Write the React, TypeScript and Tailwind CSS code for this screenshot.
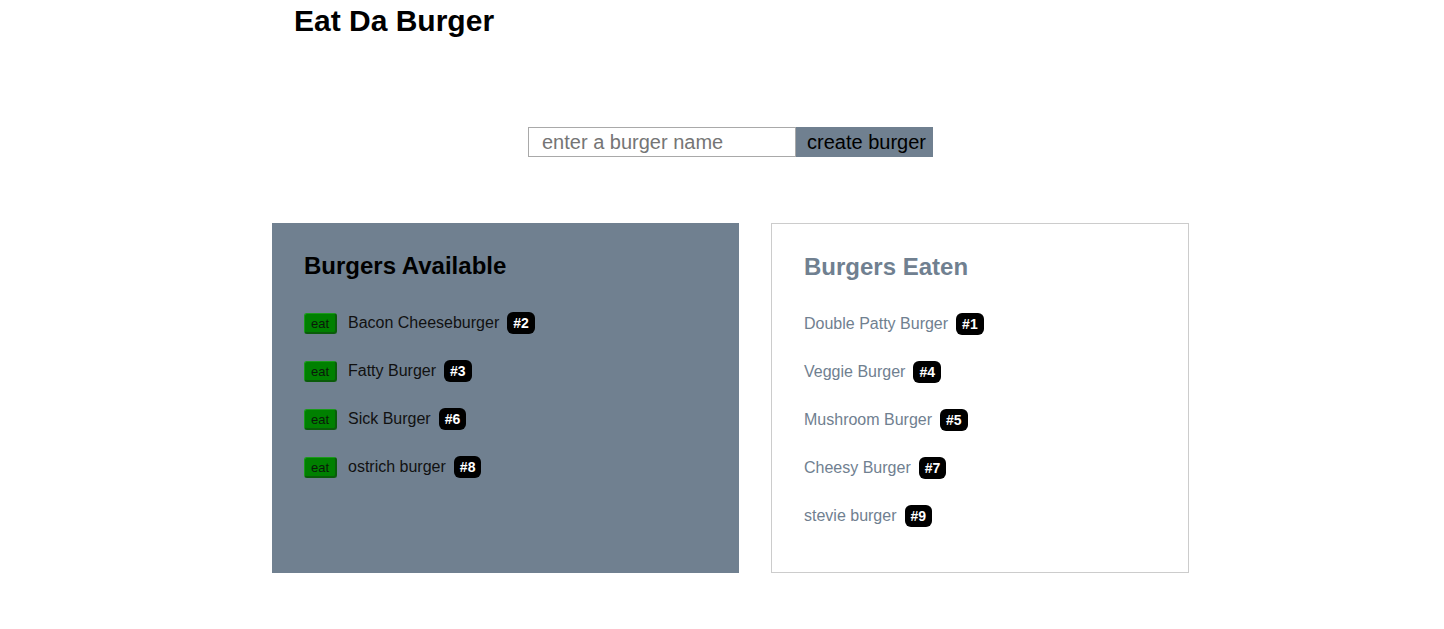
import React from "react";

const available = [
  { name: "Bacon Cheeseburger", id: 2 },
  { name: "Fatty Burger", id: 3 },
  { name: "Sick Burger", id: 6 },
  { name: "ostrich burger", id: 8 },
];

const eaten = [
  { name: "Double Patty Burger", id: 1 },
  { name: "Veggie Burger", id: 4 },
  { name: "Mushroom Burger", id: 5 },
  { name: "Cheesy Burger", id: 7 },
  { name: "stevie burger", id: 9 },
];

function Badge({ id }: { id: number }) {
  return (
    <span className="ml-[8px] inline-flex h-[22px] items-center rounded-[6px] bg-black px-[6px] text-[14px] font-bold leading-none text-white">
      #{id}
    </span>
  );
}

export default function App() {
  return (
    <div
      className="min-h-[629px] w-full bg-white"
      style={{ fontFamily: '"Liberation Sans", Arial, sans-serif' }}
    >
      <div className="ml-[272px] w-[917px]">
        <h1 className="pl-[22px] pt-[4px] text-[30px] font-bold leading-[34px] text-black">
          Eat Da Burger
        </h1>
        <div className="mt-[89px] flex justify-center">
          <input
            type="text"
            placeholder="enter a burger name"
            className="h-[30px] w-[268px] border border-[#a9a9a9] bg-white pl-[13px] text-[20px] text-black outline-none placeholder:text-[#757575]"
          />
          <button className="h-[30px] w-[137px] bg-[#708090] pl-[11px] text-left text-[20px] leading-none text-black">
            create burger
          </button>
        </div>
        <div className="mt-[66px] flex gap-[32px]">
          <div className="h-[350px] w-[467px] bg-[#708090] pl-[32px] pt-[29px]">
            <h2 className="text-[24px] font-bold leading-[28px] text-black">
              Burgers Available
            </h2>
            <ul className="mt-[32px] flex flex-col gap-[26px]">
              {available.map((b) => (
                <li key={b.id} className="flex h-[22px] items-center">
                  <button className="mt-[1px] flex h-[21px] w-[33px] items-center justify-center rounded-[3px] border border-b-2 border-r-2 border-[#0a5c0a] border-l-[#1a9a1a] border-t-[#1a9a1a] bg-[#008000] text-[13px] leading-none text-[#0a1a0a]">
                    eat
                  </button>
                  <span className="ml-[11px] text-[16px] leading-none text-[#111]">
                    {b.name}
                  </span>
                  <Badge id={b.id} />
                </li>
              ))}
            </ul>
          </div>
          <div className="h-[350px] w-[418px] border border-[#cccccc] bg-white pl-[32px] pt-[29px]">
            <h2 className="text-[24px] font-bold leading-[28px] text-[#708090]">
              Burgers Eaten
            </h2>
            <ul className="mt-[32px] flex flex-col gap-[26px]">
              {eaten.map((b) => (
                <li key={b.id} className="flex h-[22px] items-center">
                  <span className="text-[16px] leading-none text-[#708090]">
                    {b.name}
                  </span>
                  <Badge id={b.id} />
                </li>
              ))}
            </ul>
          </div>
        </div>
      </div>
    </div>
  );
}
